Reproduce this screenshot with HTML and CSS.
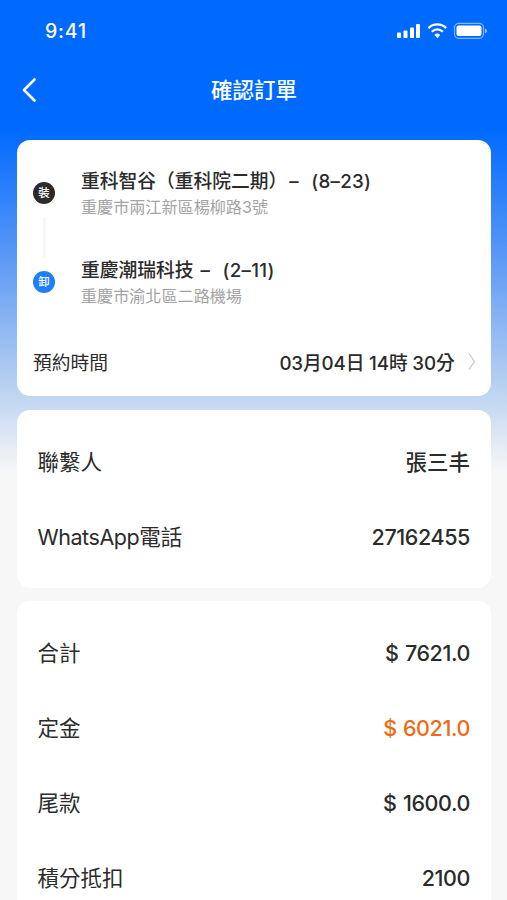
FILE: index.html
```html
<!DOCTYPE html>
<html lang="zh-Hant">
<head>
<meta charset="utf-8">
<meta name="viewport" content="width=device-width, initial-scale=1">
<title>確認訂單</title>
<link rel="stylesheet" href="styles.css">
</head>
<body>
<div class="screen">
  <div class="status">
    <span class="clock">9:41</span>
    <svg class="status-icons" width="92" height="20" viewBox="0 0 92 20" fill="#fff">
      <rect x="0" y="11.500" width="4" height="5.500" rx="1"/>
      <rect x="6.500" y="9.500" width="4" height="7.500" rx="1"/>
      <rect x="13" y="6.500" width="4" height="10.500" rx="1"/>
      <rect x="19" y="3" width="4" height="14" rx="1"/>
      <g fill="none" stroke="#fff" stroke-width="2.300">
        <path d="M31.500 7.100a12.400 12.400 0 0 1 17.600 0"/>
        <path d="M34.800 10.700a7.800 7.800 0 0 1 11 0"/>
      </g>
      <path d="M40.300 17.200l-2.900-3.200a4.200 4.200 0 0 1 5.800 0z"/>
      <rect x="57.500" y="2.300" width="29" height="15" rx="4.300" fill="none" stroke="#fff" stroke-opacity=".5" stroke-width="1.200"/>
      <rect x="59.500" y="4.600" width="25" height="10.500" rx="2"/>
      <path d="M88 7.500c2.700.8 2.700 4 0 4.800z" opacity=".6"/>
    </svg>
  </div>
  <header class="nav">
    <svg class="back" width="18" height="26" viewBox="0 0 18 26" fill="none" stroke="#fff" stroke-width="2.600" stroke-linecap="round" stroke-linejoin="round"><path d="M14.500 2.500L4 13l10.500 10.500"/></svg>
    <h1 class="title">確認訂單</h1>
  </header>
  <main class="cards">
    <section class="card route">
      <div class="stops">
        <div class="rail">
          <span class="badge">裝</span>
          <span class="line"></span>
          <span class="badge badge-blue">卸</span>
        </div>
        <div class="places">
          <div class="place">
            <div class="place-name">重科智谷（重科院二期）<span class="unit">– (8–23)</span></div>
            <div class="place-addr">重慶市兩江新區楊柳路3號</div>
          </div>
          <div class="place">
            <div class="place-name">重慶潮瑞科技 <span class="unit">– (2–11)</span></div>
            <div class="place-addr">重慶市渝北區二路機場</div>
          </div>
        </div>
      </div>
      <div class="time">
        <span>預約時間</span>
        <span class="time-value">03月04日 14時 30分</span>
        <svg width="10" height="20" viewBox="0 0 10 20" fill="none" stroke="#c9c9c9" stroke-width="1.300"><path d="M1 2.500l5.500 8L1 18.500"/></svg>
      </div>
    </section>
    <section class="card contact">
      <div class="row"><span class="label">聯繫人</span><span class="value name">張三丰</span></div>
      <div class="row"><span class="label"><span class="latin">WhatsApp</span>電話</span><span class="value">27162455</span></div>
    </section>
    <section class="card amounts">
      <div class="row"><span class="label">合計</span><span class="value">$ 7621.0</span></div>
      <div class="row"><span class="label">定金</span><span class="value accent">$ 6021.0</span></div>
      <div class="row"><span class="label">尾款</span><span class="value">$ 1600.0</span></div>
      <div class="row"><span class="label">積分抵扣</span><span class="value">2100</span></div>
    </section>
  </main>
</div>
</body>
</html>
```
FILE: styles.css
```css
* { box-sizing: border-box; }
body { margin: 0; font-family: Inter, "Noto Sans CJK TC", sans-serif; color: #2b2b2b; }
.screen {
  height: 900px;
  overflow: hidden;
  background: linear-gradient(#006aff 0, #006aff 130px, #5a98f6 255px, #c4d8f1 402px, #f7f7f7 472px);
}
.status {
  height: 60px;
  padding: 2px 18px 0 45px;
  display: flex;
  align-items: center;
  justify-content: space-between;
  color: #fff;
}
.clock { font-size: 19.500px; font-weight: 450; letter-spacing: 0.8px; }
.nav {
  height: 80px;
  padding: 0 20px 20px;
  display: grid;
  grid-template-columns: 18px 1fr 18px;
  align-items: center;
  color: #fff;
}
.title { margin: 0; padding-left: 1px; text-align: center; font-size: 21.500px; font-weight: 500; line-height: 30px; }
.cards { padding: 0 16.500px 0 17px; }
.card { background: #fff; border-radius: 13px; }
.route { height: 256px; margin-bottom: 13.500px; padding: 27px 13px 0 16px; }
.stops { display: flex; height: 168px; }
.rail { width: 22px; margin-right: 26px; padding-top: 15px; display: flex; flex-direction: column; align-items: center; }
.badge {
  width: 22px;
  height: 22px;
  border-radius: 50%;
  background: #2b2b2b;
  color: #fff;
  font-size: 11.500px;
  font-weight: 500;
  line-height: 22px;
  text-align: center;
}
.badge-blue { background: #1f7efa; }
.line { width: 3px; height: 41px; margin: 13px 0; background: #f7f7f7; }
.place { height: 89px; white-space: nowrap; }
.place-name { font-size: 18.750px; font-weight: 500; line-height: 29px; }
.place-addr { font-size: 16.100px; line-height: 23px; color: #a3a3a3; }
.unit { margin-left: 2px; word-spacing: 7px; letter-spacing: 0.3px; font-weight: 450; }
.time { height: 56px; padding-bottom: 4px; display: flex; align-items: center; font-size: 18.750px; }
.time-value { margin-left: auto; margin-right: 13px; font-weight: 500; letter-spacing: -0.15px; }
.contact { height: 178.500px; margin-bottom: 12.500px; padding-top: 14.500px; }
.amounts { height: 340px; padding-top: 15px; }
.row { height: 75px; padding: 0 20.500px; display: flex; align-items: center; justify-content: space-between; font-size: 21.500px; }
.label { padding-bottom: 3px; }
.latin { letter-spacing: -0.45px; }
.value { font-weight: 450; letter-spacing: -0.4px; word-spacing: 1px; }
.name { padding-bottom: 3px; font-weight: 500; letter-spacing: 0; }
.accent { color: #f06a14; }
```
